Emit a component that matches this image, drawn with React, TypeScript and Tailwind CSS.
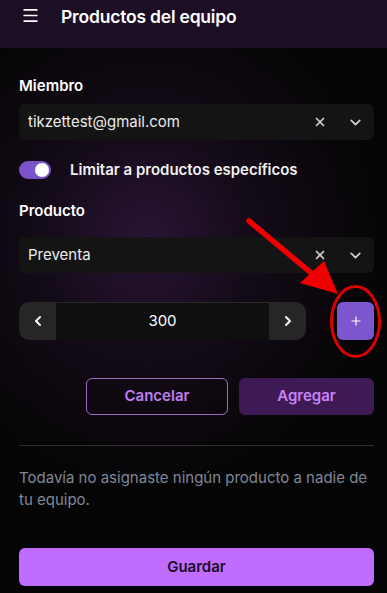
import * as React from 'react';
import { Menu, X, ChevronDown, ChevronLeft, ChevronRight, Plus } from 'lucide-react';

function SelectBox({ value }: { value: string }) {
    return (
        <div className="flex items-center h-[36px] rounded-md bg-[#141414] pl-[9px] pr-[10px]">
            <span className="flex-1 text-[15px] text-[#ececec]">{value}</span>
            <X size={14} strokeWidth={3} className="text-[#cfcfcf] mr-[20px]" />
            <ChevronDown size={17} strokeWidth={2.5} className="text-[#cfcfcf]" />
        </div>
    );
}

export default function App() {
    return (
        <div className="relative min-h-screen bg-[#050505] font-['Inter',sans-serif] text-white overflow-hidden">
            <header className="flex items-center h-[48px] bg-[#1c0f25] px-[21px] pb-[14px] gap-[21px]">
                <Menu size={19} strokeWidth={2.2} className="text-white -mt-[3px]" />
                <h1 className="text-[17.5px] font-semibold tracking-[-0.2px]">Productos del equipo</h1>
            </header>

            <main className="bg-[radial-gradient(ellipse_60%_45%_at_38%_35%,#2a1436_0%,#140b18_45%,#060506_100%)] pl-[19px] pr-[13px] pt-[28px] pb-[8px]">
                <label className="block text-[15px] leading-[20px] font-semibold mb-[8px]">Miembro</label>
                <SelectBox value="tikzettest@gmail.com" />

                <div className="flex items-center gap-[19px] mt-[20px] h-[20px]">
                    <div className="flex items-center justify-end w-[32px] h-[18px] rounded-full bg-[#7a52c9] px-[2px]">
                        <div className="w-[14px] h-[14px] rounded-full bg-white" />
                    </div>
                    <span className="text-[15px] leading-[20px] font-semibold text-[#f2f2f2]">Limitar a productos específicos</span>
                </div>

                <label className="block text-[15px] leading-[20px] font-semibold mt-[21px] mb-[16px]">Producto</label>
                <SelectBox value="Preventa" />

                <div className="flex items-center mt-[29px]">
                    <div className="flex h-[38px] w-[287px] rounded-[10px] overflow-hidden">
                        <button className="flex items-center justify-center w-[37px] bg-[#262626]">
                            <ChevronLeft size={16} strokeWidth={3} className="text-white" />
                        </button>
                        <div className="flex-1 flex items-center justify-center bg-[#0f0f0f] border-t border-[#2a2a2a] text-[15px]">300</div>
                        <button className="flex items-center justify-center w-[37px] bg-[#262626]">
                            <ChevronRight size={16} strokeWidth={3} className="text-white" />
                        </button>
                    </div>
                    <button className="ml-auto flex items-center justify-center w-[37px] h-[38px] rounded-md bg-[#7b56cf]">
                        <Plus size={14} strokeWidth={2} className="text-white" />
                    </button>
                </div>

                <div className="flex justify-end gap-[11px] mt-[38px]">
                    <button className="w-[142px] h-[37px] rounded-md border border-[#9c6cc0] text-[15px] font-semibold text-[#c07ef0]">Cancelar</button>
                    <button className="w-[135px] h-[37px] rounded-md bg-[#3f1b55] text-[15px] font-semibold text-[#c883f5]">Agregar</button>
                </div>

                <div className="h-px bg-[#2e2e2e] mt-[30px]" />

                <p className="mt-[21px] text-[15px] leading-[22px] text-[#7f8896]">
                    Todavía no asignaste ningún producto a nadie de tu equipo.
                </p>

                <button className="w-full h-[38px] mt-[37px] rounded-md bg-[#c06cff] text-[15px] font-semibold text-[#1a0a26]">Guardar</button>
            </main>

            <svg className="absolute left-0 top-0 pointer-events-none" width="387" height="593" viewBox="0 0 387 593">
                <line x1="249" y1="221" x2="316" y2="277" stroke="#ee0000" strokeWidth="5.5" strokeLinecap="round" />
                <polygon points="338,294 300,283 324,261" fill="#ee0000" />
                <ellipse cx="355.5" cy="321.5" rx="24" ry="35" fill="none" stroke="#dd0000" strokeWidth="3" />
            </svg>
        </div>
    );
}
